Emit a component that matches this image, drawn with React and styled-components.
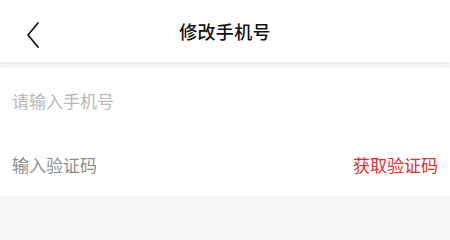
import styled, { createGlobalStyle } from "styled-components";

const GlobalStyle = createGlobalStyle`
  html, body {
    margin: 0;
    padding: 0;
    height: 100%;
    overflow: hidden;
    background: #f6f6f6;
    font-family: "Noto Sans CJK SC", "Noto Sans", sans-serif;
  }
`;

const Page = styled.div`
  width: 450px;
  height: 209px;
  overflow: hidden;
  background: #f6f6f6;
  display: flex;
  flex-direction: column;
`;

const Header = styled.header`
  position: relative;
  flex: none;
  height: 62px;
  background: #ffffff;
  display: flex;
  align-items: center;
  justify-content: center;
  box-shadow: 0 1px 5px rgba(0, 0, 0, 0.06);
  z-index: 1;
`;

const BackButton = styled.button`
  position: absolute;
  left: 22px;
  top: 20px;
  width: 22px;
  height: 30px;
  padding: 0;
  border: none;
  background: none;
  display: flex;
  align-items: center;
  justify-content: center;
`;

const Title = styled.h1`
  margin: 0;
  font-size: 18px;
  font-weight: 500;
  color: #111111;
  letter-spacing: 0.3px;
`;

const Form = styled.section`
  margin-top: 6px;
  background: #ffffff;
  display: flex;
  flex-direction: column;
`;

const Row = styled.div`
  height: 64px;
  padding: 0 12px;
  display: flex;
  align-items: center;
  justify-content: space-between;
`;

const Field = styled.input`
  flex: 1;
  min-width: 0;
  border: none;
  outline: none;
  background: transparent;
  font-family: inherit;
  font-size: 17px;
  padding: 0;
  color: #333333;

  &::placeholder {
    color: ${(p) => p.$tone || "#b8b8b8"};
  }
`;

const CodeButton = styled.button`
  border: none;
  background: none;
  padding: 0;
  font-family: inherit;
  font-size: 17px;
  color: #d9312b;
`;

const App = () => {
  return (
    <Page>
      <GlobalStyle />
      <Header>
        <BackButton aria-label="返回">
          <svg width="16" height="28" viewBox="0 0 16 28" fill="none">
            <path
              d="M13 2 L3 14 L13 26"
              stroke="#111111"
              strokeWidth="1.7"
              strokeLinecap="round"
              strokeLinejoin="round"
            />
          </svg>
        </BackButton>
        <Title>修改手机号</Title>
      </Header>
      <Form>
        <Row>
          <Field placeholder="请输入手机号" />
        </Row>
        <Row>
          <Field placeholder="输入验证码" $tone="#8e8e8e" />
          <CodeButton>获取验证码</CodeButton>
        </Row>
      </Form>
    </Page>
  );
};

export default App;
